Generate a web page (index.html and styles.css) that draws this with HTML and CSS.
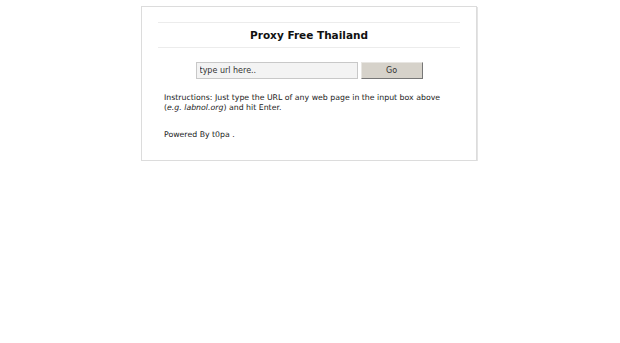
FILE: index.html
```html
<!DOCTYPE html>
<html>
<head>
<meta charset="utf-8">
<title>Proxy Free Thailand</title>
<link rel="stylesheet" href="styles.css">
</head>
<body>
<div class="box">
  <div class="title">Proxy Free Thailand</div>
  <form class="form">
    <input class="url" type="text" value="type url here..">
    <button class="go" type="button">Go</button>
  </form>
  <p class="instr">Instructions: Just type the URL of any web page in the input box above (<i>e.g. labnol.org</i>) and hit Enter.</p>
  <p class="powered">Powered By t0pa .</p>
</div>
</body>
</html>
```
FILE: styles.css
```css
html, body {
  margin: 0;
  padding: 0;
  background: #fff;
}
body {
  font-family: "DejaVu Sans", sans-serif;
  color: #222;
}
.box {
  margin: 6px 0 0 calc(50% - 169px);
  border: 1px solid #dcdcdc;
  box-shadow: 1px 1px 0 #e4e4e4;
  padding: 15px 16px 20px;
  box-sizing: content-box;
  width: 302px;
}
.title {
  border-top: 1px solid #ececec;
  border-bottom: 1px solid #ececec;
  text-align: center;
  font-weight: bold;
  font-size: 10.5px;
  line-height: 24px;
  color: #111;
}
.form {
  display: flex;
  justify-content: center;
  gap: 3px;
  margin: 14px 0 0;
}
.url {
  width: 162px;
  height: 17px;
  box-sizing: border-box;
  border: 1px solid #c8c8c8;
  background: #f3f3f3;
  font-family: "DejaVu Sans", sans-serif;
  font-size: 8px;
  color: #333;
  padding: 0 3px;
  margin: 0;
}
.go {
  width: 62px;
  height: 17px;
  box-sizing: border-box;
  background: #d6d2ca;
  border: 1px solid;
  border-color: #e8e6e2 #777 #777 #e8e6e2;
  font-family: "DejaVu Sans", sans-serif;
  font-size: 8px;
  color: #333;
  padding: 0;
  margin: 0;
}
.instr {
  margin: 14px 0 0 6px;
  font-size: 7.8px;
  line-height: 10px;
  color: #222;
}
.powered {
  margin: 17px 0 0 6px;
  font-size: 7.8px;
  line-height: 10px;
  color: #222;
}
```
